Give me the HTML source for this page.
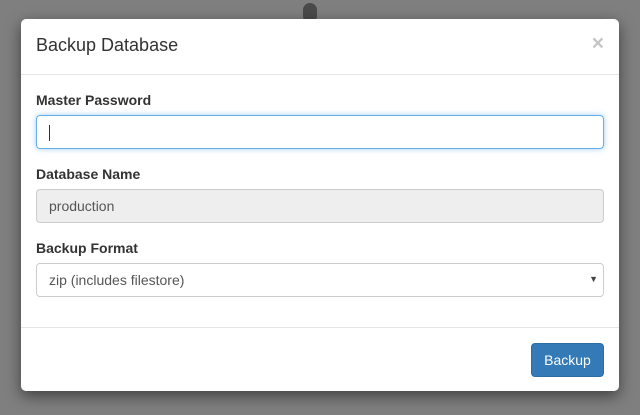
<!DOCTYPE html>
<html><head><style>
body{margin:0;width:640px;height:415px;background:#7f7f7f;font-family:"Liberation Sans",sans-serif;position:relative;overflow:hidden;color:#333}
.knob{position:absolute;left:303px;top:3px;width:14px;height:20px;background:#4a4a4a;border-radius:7px}
.modal{position:absolute;left:21px;top:19px;width:598px;height:372px;background:#fff;border-radius:5px;box-shadow:0 5px 15px rgba(0,0,0,.5)}
.hdr{height:55px;border-bottom:1px solid #e5e5e5;position:relative}
.hdr h4{margin:0;position:absolute;left:15px;top:16px;font-size:18px;font-weight:normal;color:#333}
.x{position:absolute;right:15px;top:13px;font-size:21px;font-weight:bold;color:#c6c6c6}
label{position:absolute;left:15px;font-size:14px;font-weight:bold;color:#333}
.in{position:absolute;left:15px;width:568px;height:34px;border:1px solid #ccc;border-radius:4px;font-size:14px;box-sizing:border-box;padding:8px 12px;color:#555}
.ftr{position:absolute;left:0;right:0;top:308px;border-top:1px solid #e5e5e5}
.btn{position:absolute;left:510px;top:324px;width:73px;height:34px;background:#337ab7;border:1px solid #2e6da4;border-radius:4px;box-sizing:border-box;color:#fff;font-size:14px;text-align:center;line-height:32px}
</style></head><body>
<div class="knob"></div>
<div class="modal">
<div class="hdr"><h4>Backup Database</h4><div class="x">×</div></div>
<label style="top:73px">Master Password</label>
<div class="in" style="top:96px;border-color:#66afe9;box-shadow:0 0 6px rgba(102,175,233,.6)"><span style="display:inline-block;width:1px;height:16px;background:#333;margin-top:1px"></span></div>
<label style="top:147px">Database Name</label>
<div class="in" style="top:170px;background:#eee">production</div>
<label style="top:221px">Backup Format</label>
<div class="in" style="top:244px">zip (includes filestore)<span style="position:absolute;right:5px;top:10px;font-size:9px;color:#444">▼</span></div>
<div class="ftr"></div>
<div class="btn">Backup</div>
</div>
</body></html>
